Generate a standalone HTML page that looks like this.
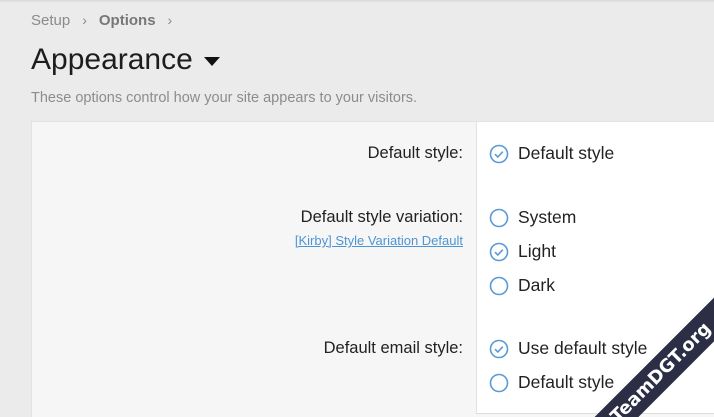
<!DOCTYPE html>
<html><head><style>
html,body{margin:0;overflow:hidden;width:714px;height:417px}
#w{position:relative;width:714px;height:417px;overflow:hidden;background:#ebebeb;font-family:"Segoe UI","Liberation Sans",sans-serif}
.top{position:absolute;left:0;top:0;width:714px;height:3px;background:linear-gradient(#d8d8d8,#ebebeb)}
.bc{position:absolute;left:31px;top:12px;font-size:15px;color:#8a8a8a}
.bc b{color:#777}
.bc span{margin:0 12px;font-size:14px}
h1{position:absolute;left:31px;top:43px;margin:0;font-weight:400;font-size:30px;color:#1d1d1d}
.desc{position:absolute;left:31px;top:90px;font-size:14.5px;color:#8c8c8c}
.panel{position:absolute;left:31px;top:121px;width:700px;height:300px;background:#f6f6f6;border:1px solid #e2e2e2;border-right:none;border-bottom:none}
.right{position:absolute;left:476px;top:122px;width:240px;height:291px;background:#fff;border-left:1px solid #e2e2e2}
.bottom{position:absolute;left:476px;top:413px;width:240px;height:1px;background:#ddd}
.lbl{position:absolute;right:251px;font-size:16.5px;color:#222;text-align:right}
.lnk{position:absolute;right:251px;top:233px;font-size:13px;color:#4e94d3;text-decoration:underline}
.opt{position:absolute;left:489px;font-size:17.5px;color:#222;display:flex;align-items:center}
.opt svg{margin-right:9px}
.rib{position:absolute;left:518px;top:350px;width:300px;height:31px;background:#2b2e45;transform:rotate(-45deg);color:#fff;font-weight:bold;font-size:18px;text-align:center;line-height:31px;font-family:"DejaVu Sans","Liberation Sans",sans-serif;box-sizing:border-box;padding-right:20px}
</style></head><body><div id="w">
<div class="top"></div>
<div class="bc">Setup<span>›</span><b>Options</b><span>›</span></div>
<h1>Appearance <svg width="18" height="12" viewBox="0 0 18 12" style="vertical-align:middle;margin-left:2px"><path d="M1 2h16l-8 9z" fill="#111"/></svg></h1>
<div class="desc">These options control how your site appears to your visitors.</div>
<div class="panel"></div>
<div class="right"></div>
<div class="bottom"></div>
<div class="lbl" style="top:144px">Default style:</div>
<div class="lbl" style="top:208px">Default style variation:</div>
<div class="lnk">[Kirby] Style Variation Default</div>
<div class="lbl" style="top:339px">Default email style:</div>
<div class="opt" style="top:143px"><svg width="20" height="20"><circle cx="10" cy="10" r="8.5" fill="none" stroke="#5a9ad6" stroke-width="1.6"/><path d="M6 10.2l2.8 2.8 5-5.3" fill="none" stroke="#5a9ad6" stroke-width="1.6"/></svg>Default style</div>
<div class="opt" style="top:207px"><svg width="20" height="20"><circle cx="10" cy="10" r="8.5" fill="none" stroke="#5a9ad6" stroke-width="1.6"/></svg>System</div>
<div class="opt" style="top:241px"><svg width="20" height="20"><circle cx="10" cy="10" r="8.5" fill="none" stroke="#5a9ad6" stroke-width="1.6"/><path d="M6 10.2l2.8 2.8 5-5.3" fill="none" stroke="#5a9ad6" stroke-width="1.6"/></svg>Light</div>
<div class="opt" style="top:275px"><svg width="20" height="20"><circle cx="10" cy="10" r="8.5" fill="none" stroke="#5a9ad6" stroke-width="1.6"/></svg>Dark</div>
<div class="opt" style="top:338px"><svg width="20" height="20"><circle cx="10" cy="10" r="8.5" fill="none" stroke="#5a9ad6" stroke-width="1.6"/><path d="M6 10.2l2.8 2.8 5-5.3" fill="none" stroke="#5a9ad6" stroke-width="1.6"/></svg>Use default style</div>
<div class="opt" style="top:372px"><svg width="20" height="20"><circle cx="10" cy="10" r="8.5" fill="none" stroke="#5a9ad6" stroke-width="1.6"/></svg>Default style</div>
<div class="rib">TeamDGT.org</div>
</div></body></html>
